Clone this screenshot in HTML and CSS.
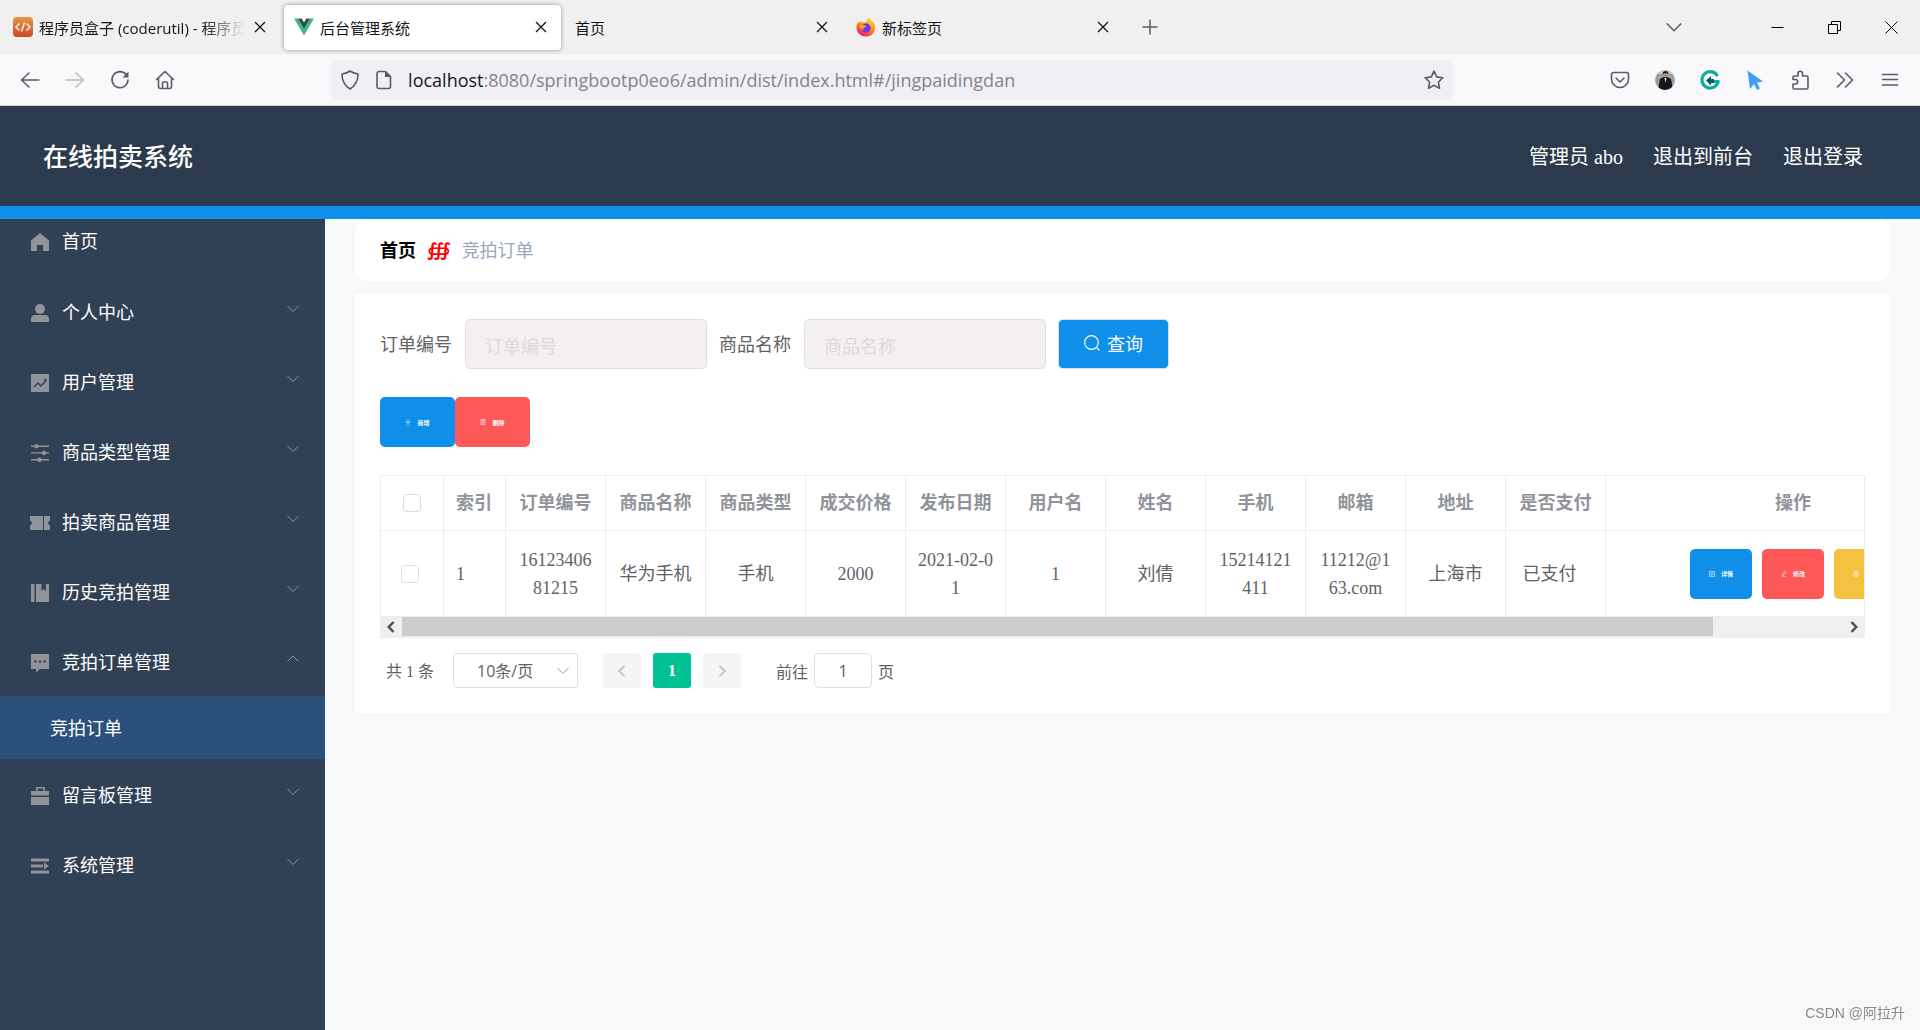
FILE: index.html
```html
<!DOCTYPE html>
<html lang="zh-CN">
<head>
<meta charset="utf-8">
<meta name="viewport" content="width=device-width, initial-scale=1">
<title>后台管理系统</title>
<link rel="stylesheet" href="styles.css">
</head>
<body>
<div class="browser">
  <div class="tabstrip">
    <div class="tab">
      <svg class="tab-icon" viewBox="0 0 20 20"><defs><linearGradient id="box" x1="0" y1="0" x2="0" y2="1"><stop offset="0" stop-color="#e8964f"/><stop offset="1" stop-color="#c94a26"/></linearGradient></defs><rect width="20" height="20" rx="4" fill="url(#box)"/><path d="M6.500 6.500 3 10l3.500 3.500M13.500 6.500 17 10l-3.500 3.500M11.500 5.500l-3 9" fill="none" stroke="#fbe6d6" stroke-width="1.600"/></svg>
      <span class="tab-title fade">程序员盒子 (coderutil) - 程序员</span>
      <button class="tab-close" aria-label="关闭"><svg viewBox="0 0 12 12"><path d="M1 1l10 10M11 1 1 11"/></svg></button>
    </div>
    <div class="tab active">
      <svg class="tab-icon" viewBox="0 0 20 20"><path d="M0 1.500h4L10 12l6-10.500h4L10 18.500z" fill="#41b883"/><path d="M4 1.500h3.700L10 5.500l2.300-4H16L10 12z" fill="#35495e"/></svg>
      <span class="tab-title">后台管理系统</span>
      <button class="tab-close" aria-label="关闭"><svg viewBox="0 0 12 12"><path d="M1 1l10 10M11 1 1 11"/></svg></button>
    </div>
    <div class="tab">
      <span class="tab-title">首页</span>
      <button class="tab-close" aria-label="关闭"><svg viewBox="0 0 12 12"><path d="M1 1l10 10M11 1 1 11"/></svg></button>
    </div>
    <div class="tab">
      <svg class="tab-icon" viewBox="0 0 20 20"><defs><linearGradient id="fox" x1="0.800" y1="0" x2="0.300" y2="1"><stop offset="0" stop-color="#ffe83a"/><stop offset="0.450" stop-color="#ff9420"/><stop offset="1" stop-color="#f5156c"/></linearGradient></defs><path d="M13.500.500c.5 2 3 3.300 4.300 5.300 3 4.500 1.200 13.700-7.800 13.700C3 19.500-.500 13.500.700 8.500c.2-1.500.8-2.800 1.600-3.700l.6 1.400C3.500 5 4.300 4.200 5 3.800c0 .8.200 1.400.7 1.800 1.300-.6 3-.6 4.300-.1.500-2.200 1.700-4 3.500-5z" fill="url(#fox)"/><circle cx="10" cy="11" r="4.600" fill="#6a3be0"/><path d="M4.500 8.200c2-.5 3.700 0 5.300.5.800.8-.5 1.800-2.300 2.100-.7.300-.3 1.700 1 2-2.500.3-4.800-2-4-4.600z" fill="#ffa62b"/></svg>
      <span class="tab-title">新标签页</span>
      <button class="tab-close" aria-label="关闭"><svg viewBox="0 0 12 12"><path d="M1 1l10 10M11 1 1 11"/></svg></button>
    </div>
    <button class="new-tab" aria-label="新建标签页"><svg viewBox="0 0 16 16"><path d="M8 .500v15M.500 8h15"/></svg></button>
    <div class="window-controls">
      <button class="tab-list" aria-label="列出标签页"><svg viewBox="0 0 16 16"><path d="M.800 4.500 8 11.800l7.200-7.300"/></svg></button>
      <button aria-label="最小化"><svg viewBox="0 0 13 13"><path d="M.500 6.500h12"/></svg></button>
      <button aria-label="还原"><svg viewBox="0 0 13 13"><path d="M.500 3.500h9v9h-9zM3.500 3.500v-3h9v9h-3"/></svg></button>
      <button aria-label="关闭窗口"><svg viewBox="0 0 13 13"><path d="M.500.500l12 12M12.500.500l-12 12"/></svg></button>
    </div>
  </div>
  <div class="toolbar">
    <button aria-label="后退"><svg viewBox="0 0 20 20"><path d="M19 10H2M9 3l-7.500 7L9 17"/></svg></button>
    <button class="disabled" aria-label="前进"><svg viewBox="0 0 20 20"><path d="M1 10h17M11 3l7.500 7-7.500 7"/></svg></button>
    <button aria-label="刷新"><svg viewBox="0 0 20 20"><path d="M16.500 5A8 8 0 1 0 18 10"/><path d="M18.500 1.500v6h-6z" fill="#5b5b66" stroke="none"/></svg></button>
    <button aria-label="主页"><svg viewBox="0 0 20 20"><path d="M1.500 9.500 10 1.500l8.500 8M3.500 8v8.500a2 2 0 0 0 2 2h9a2 2 0 0 0 2-2V8M7.500 18v-5a1 1 0 0 1 1-1h3a1 1 0 0 1 1 1v5"/></svg></button>
    <div class="spring"></div>
    <div class="urlbar">
      <svg viewBox="0 0 20 20"><path d="M10 1c2.500 1.800 5 2.500 8 3 0 6-1.500 11-8 15C3.500 15 2 10 2 4c3-.5 5.500-1.200 8-3z"/></svg>
      <svg viewBox="0 0 20 20"><path d="M5 1.500h6.500l5 5v10a2 2 0 0 1-2 2H5a2 2 0 0 1-2-2v-13a2 2 0 0 1 2-2z"/><path d="M11 1v6h6z" fill="#5b5b66" stroke="none"/></svg>
      <div class="url" role="textbox" aria-label="地址"><span class="host">localhost</span>:8080/springbootp0eo6/admin/dist/index.html#/jingpaidingdan</div>
      <button aria-label="收藏"><svg viewBox="0 0 20 20"><path d="M10 1.200l2.700 5.700 6.200.8-4.500 4.300 1.100 6.300L10 15.200l-5.500 3.100L5.600 12 1.100 7.700l6.200-.8z"/></svg></button>
    </div>
    <div class="spring"></div>
    <button aria-label="保存到 Pocket"><svg viewBox="0 0 20 20"><path d="M3.500 2.500h13a2 2 0 0 1 2 2V9a8.500 8.500 0 0 1-17 0V4.500a2 2 0 0 1 2-2zM6 8l4 4 4-4"/></svg></button>
    <button aria-label="账户"><svg viewBox="0 0 20 20"><clipPath id="face"><circle cx="10" cy="10" r="10"/></clipPath><g clip-path="url(#face)" stroke="none"><rect width="20" height="20" fill="#9aa09a"/><path d="M0 0h20v4H0z" fill="#c9cdc8"/><path d="M3 20 5 9l4-2h3l4 2 2 11z" fill="#15161c"/><circle cx="10.500" cy="4.500" r="2.800" fill="#b98f78"/><path d="M7.500 4c0-4 6-4 6 0-2-1.500-4-1.500-6 0z" fill="#17171b"/><path d="M9.500 8h2l-1 5z" fill="#e8e8ea"/></g></svg></button>
    <button aria-label="Grammarly"><svg viewBox="0 0 20 20"><path d="M16.800 5A8.200 8.200 0 1 0 18.200 11.500H12" fill="none" stroke="#0fae9c" stroke-width="3.200"/><path d="M6 10.500l5-4.500v3h3v4h-3v2.500z" fill="#075f5c" stroke="none"/></svg></button>
    <button aria-label="指针"><svg viewBox="0 0 20 20"><path d="M2.500.500 18 11.500l-6 1 3 6-3 1.500-3-6-4 5z" fill="#459bfb" stroke="none"/></svg></button>
    <button aria-label="扩展"><svg viewBox="0 0 20 20"><path d="M8 6V3.500a2 2 0 0 1 4.500 0V6h4a1.500 1.500 0 0 1 1.500 1.500v10a1.500 1.500 0 0 1-1.500 1.500h-12A1.500 1.500 0 0 1 3 17.500V14h2.500a2 2 0 0 0 0-4.500H3v-2A1.500 1.500 0 0 1 4.500 6z"/></svg></button>
    <button aria-label="更多工具"><svg viewBox="0 0 20 20"><path d="M2.500 3l7 7-7 7M10.500 3l7 7-7 7"/></svg></button>
    <button aria-label="菜单"><svg viewBox="0 0 20 20"><path d="M2.500 4.500h15M2.500 9.500h15M2.500 15h15"/></svg></button>
  </div>
</div>

<header class="header">
  <h1>在线拍卖系统</h1>
  <nav class="header-links">
    <span>管理员 abo</span>
    <a href="#front">退出到前台</a>
    <a href="#logout">退出登录</a>
  </nav>
</header>

<div class="layout">
  <nav class="sidebar" aria-label="主菜单">
    <a class="item home" href="#home"><svg class="ico" viewBox="0 0 18 18"><path d="M9 0l9 7.500V18h-6v-6H6v6H0V7.500z"/></svg><span>首页</span></a>
    <button class="item"><svg class="ico" viewBox="0 0 18 18"><circle cx="9" cy="5" r="5"/><path d="M0 18v-3a4 4 0 0 1 4-4h10a4 4 0 0 1 4 4v3z"/></svg><span>个人中心</span><svg class="arrow" viewBox="0 0 12 12"><path d="M.500 3 6 8.500 11.500 3"/></svg></button>
    <button class="item"><svg class="ico" viewBox="0 0 18 18"><path d="M0 0h18v18H0z"/><path d="M3 13l4-4 3 3 5.500-6M13 5.500h2" fill="none" stroke="#304156" stroke-width="1.500"/></svg><span>用户管理</span><svg class="arrow" viewBox="0 0 12 12"><path d="M.500 3 6 8.500 11.500 3"/></svg></button>
    <button class="item"><svg class="ico" viewBox="0 0 18 18"><path d="M0 1.500h18v1.400H0zM0 8.200h18v1.400H0zM0 15h18v1.400H0z"/><circle cx="5.500" cy="2.200" r="2.200"/><circle cx="13" cy="9" r="2.200"/><circle cx="8.500" cy="15.700" r="2.200"/></svg><span>商品类型管理</span><svg class="arrow" viewBox="0 0 12 12"><path d="M.500 3 6 8.500 11.500 3"/></svg></button>
    <button class="item"><svg class="ico" viewBox="0 0 18 18"><path d="M-1 2h13v14H-1v-4.500a2.600 2.600 0 0 0 0-5zM13 2h6v4.500a2.600 2.600 0 0 0 0 5V16h-6z"/><path d="M12.500 4v11" stroke="#304156" stroke-dasharray="2 2"/></svg><span>拍卖商品管理</span><svg class="arrow" viewBox="0 0 12 12"><path d="M.500 3 6 8.500 11.500 3"/></svg></button>
    <button class="item"><svg class="ico" viewBox="0 0 18 18"><path d="M0 0h3.500v18H0zM5 0h5.500v7l2.300-2 2.200 2V0h3v18H5z"/></svg><span>历史竞拍管理</span><svg class="arrow" viewBox="0 0 12 12"><path d="M.500 3 6 8.500 11.500 3"/></svg></button>
    <button class="item" aria-expanded="true"><svg class="ico" viewBox="0 0 18 18"><path d="M0 0h18v15H9l-4 3.500V15H0z"/><path d="M3 6.500h2.400v2H3zM7.800 6.500h2.400v2H7.800zM12.600 6.500H15v2h-2.400z" fill="#304156"/></svg><span>竞拍订单管理</span><svg class="arrow" viewBox="0 0 12 12"><path d="M.500 8.500 6 3l5.500 5.500"/></svg></button>
    <a class="subitem" href="#jingpaidingdan" aria-current="page">竞拍订单</a>
    <button class="item"><svg class="ico" viewBox="0 0 18 18"><path d="M5 0h9v4h4v4.500H0V4h5zM6.500 1.500V4h6V1.500zM0 10h18v8H0z" fill-rule="evenodd"/></svg><span>留言板管理</span><svg class="arrow" viewBox="0 0 12 12"><path d="M.500 3 6 8.500 11.500 3"/></svg></button>
    <button class="item"><svg class="ico" viewBox="0 0 18 18"><path d="M0 1.500h18v3H0zM0 7.500h12v3H0zM0 13.500h18v3H0zM13 5.500l5 3.500-5 3.500z"/></svg><span>系统管理</span><svg class="arrow" viewBox="0 0 12 12"><path d="M.500 3 6 8.500 11.500 3"/></svg></button>
  </nav>

  <main class="main">
    <nav class="breadcrumb" aria-label="面包屑">
      <a href="#home">首页</a><span class="sep">∰</span><span class="current">竞拍订单</span>
    </nav>

    <section class="card">
      <form class="search">
        <label for="order-no">订单编号</label>
        <input id="order-no" type="text" placeholder="订单编号">
        <label for="goods-name">商品名称</label>
        <input id="goods-name" type="text" placeholder="商品名称">
        <button type="button"><svg viewBox="0 0 16 16"><circle cx="7.500" cy="7.500" r="6.800"/><path d="M12.200 12.200 15.500 15.500"/></svg>查询</button>
      </form>

      <div class="actions">
        <button class="btn blue"><svg viewBox="0 0 6 6"><path d="M3 0v6M0 3h6"/></svg>新增</button>
        <button class="btn red"><svg viewBox="0 0 6 6"><path d="M.500 1h5M2 1V.300h2V1M1 1v4.600h4V1M2.400 2.200v2.400M3.600 2.200v2.400"/></svg>删除</button>
      </div>

      <div class="table-box">
        <div class="table-clip">
          <table>
            <colgroup>
              <col class="c-check"><col class="c-index"><col class="c"><col class="c"><col class="c"><col class="c"><col class="c"><col class="c"><col class="c"><col class="c"><col class="c"><col class="c"><col class="c"><col>
            </colgroup>
            <thead>
              <tr>
                <th><input type="checkbox" aria-label="全选"></th>
                <th class="left">索引</th><th>订单编号</th><th>商品名称</th><th>商品类型</th><th>成交价格</th><th>发布日期</th><th>用户名</th><th>姓名</th><th>手机</th><th>邮箱</th><th>地址</th><th>是否支付</th><th>操作</th>
              </tr>
            </thead>
            <tbody>
              <tr>
                <td class="left"><input class="row-check" type="checkbox" aria-label="选择第 1 行"></td>
                <td class="left">1</td><td>1612340681215</td><td>华为手机</td><td>手机</td><td>2000</td><td>2021-02-01</td><td>1</td><td>刘倩</td><td>15214121411</td><td>11212@163.com</td><td>上海市</td><td class="status">已支付</td>
                <td>
                  <div class="ops">
                    <button class="btn blue"><svg viewBox="0 0 6 6"><path d="M.500.300h5v5.400h-5zM1.700 2h2.600M1.700 3.200h2.600M1.700 4.400h1.600"/></svg>详情</button>
                    <button class="btn red"><svg viewBox="0 0 6 6"><path d="M1.500 3.500 4 .500l1 1L2.500 4.200l-1.200.3zM.500 5.700h5"/></svg>修改</button>
                    <button class="btn yellow"><svg viewBox="0 0 6 6"><path d="M.500 1h5M2 1V.300h2V1M1 1v4.600h4V1M2.400 2.200v2.400M3.600 2.200v2.400"/></svg>删除</button>
                  </div>
                </td>
              </tr>
            </tbody>
          </table>
        </div>
        <div class="scrollbar" aria-hidden="true">
          <svg viewBox="0 0 8 12"><path d="M6.500 1 1.800 6l4.700 5"/></svg>
          <div class="track"><div class="thumb"></div></div>
          <svg viewBox="0 0 8 12"><path d="M1.500 1l4.700 5-4.700 5"/></svg>
        </div>
      </div>

      <div class="pagination">
        <span class="total">共 1 条</span>
        <span class="select-box">
          <select aria-label="每页条数"><option>10条/页</option></select>
          <svg viewBox="0 0 12 12"><path d="M.500 3 6 8.500 11.500 3"/></svg>
        </span>
        <div class="pages">
          <button aria-label="上一页" disabled><svg viewBox="0 0 12 12"><path d="M8.500 1 3 6l5.500 5"/></svg></button>
          <button class="on">1</button>
          <button aria-label="下一页" disabled><svg viewBox="0 0 12 12"><path d="M3.500 1 9 6l-5.500 5"/></svg></button>
        </div>
        <label class="jump">前往<input type="text" value="1">页</label>
      </div>
    </section>
  </main>
</div>
<div class="watermark">CSDN @阿拉升</div>
</body>
</html>
```
FILE: styles.css
```css
* { box-sizing: border-box; }

body {
  margin: 0;
  min-height: 100vh;
  display: flex;
  flex-direction: column;
  background: #f7f8fa;
  font-family: "Liberation Serif", "Noto Sans CJK SC", serif;
  font-size: 18px;
  color: #606266;
}

button, input, select { font: inherit; color: inherit; }
button { border: 0; padding: 0; background: none; }
a { color: inherit; text-decoration: none; }
svg { display: block; flex: none; }

/* Browser window */
.browser { font-family: "Open Sans", "Noto Sans CJK SC", sans-serif; color: #15141a; }
.tabstrip { display: flex; align-items: center; height: 55px; padding: 0 0 1px 3px; background: #f0f0f0; }
.tab {
  display: flex;
  align-items: center;
  gap: 6px;
  flex: 0 1 277px;
  min-width: 0;
  height: 45px;
  margin-right: 4px;
  padding: 0 10px;
  border-radius: 4px;
  font-size: 15px;
}
.tab.active { background: #fff; box-shadow: 0 0 4px rgba(0, 0, 0, .4); }
.tab-icon { width: 20px; height: 20px; }
.tab-title { flex: 1; min-width: 0; overflow: hidden; white-space: nowrap; }
.tab-title.fade { -webkit-mask-image: linear-gradient(to left, transparent, #000 40px); mask-image: linear-gradient(to left, transparent, #000 40px); }
.tab-close { display: grid; place-items: center; width: 20px; height: 20px; }
.tab-close svg { width: 12px; height: 12px; fill: none; stroke: #15141a; stroke-width: 1.300; }
.new-tab { display: grid; place-items: center; width: 45px; height: 45px; }
.new-tab svg, .tab-list svg { width: 16px; height: 16px; fill: none; stroke: #5b5b66; stroke-width: 1.500; }
.window-controls { display: flex; margin-left: auto; }
.window-controls button { display: grid; place-items: center; width: 57px; height: 52px; }
.window-controls svg { width: 13px; height: 13px; fill: none; stroke: #000; }
.window-controls .tab-list { margin-right: 47px; }
.window-controls .tab-list svg { width: 16px; height: 16px; stroke: #5b5b66; }

.toolbar { display: flex; align-items: center; height: 51px; padding: 0 8px 0 7px; background: #f9f9fb; border-bottom: 1px solid #ccc; }
.toolbar > button { display: grid; place-items: center; width: 45px; height: 40px; }
.toolbar svg { width: 20px; height: 20px; fill: none; stroke: #5b5b66; stroke-width: 1.600; stroke-linecap: round; stroke-linejoin: round; }
.toolbar .disabled { opacity: .4; }
.spring { flex: 143 1 0; }
.urlbar { display: flex; align-items: center; flex: 1103 1 0; height: 40px; padding: 0 10px; gap: 14px; border-radius: 5px; background: #f0f0f4; }
.url { flex: 1; min-width: 0; overflow: hidden; white-space: nowrap; font-size: 18px; color: #85848b; }
.url .host { color: #15141a; }

/* Site header */
.header {
  display: flex;
  align-items: center;
  justify-content: space-between;
  height: 113px;
  padding: 0 57px 2px 43px;
  background: #2b3b4d;
  border-bottom: 13px solid #0f8eea;
  color: #fff;
}
.header h1 { margin: 0; font-size: 25px; font-weight: 500; }
.header-links { display: flex; gap: 30px; font-size: 20px; }

/* Side menu */
.layout { display: flex; flex: 1; }
.sidebar { flex: none; width: 325px; background: #304156; color: #fff; }
.item { display: flex; align-items: center; width: 100%; height: 70px; padding: 0 26px 0 31px; gap: 13px; text-align: left; }
.item.home { height: 57px; padding-bottom: 16px; }
.ico { width: 18px; height: 18px; margin-top: 4px; fill: #909399; overflow: visible; }
.arrow { width: 12px; height: 12px; margin: 0 0 4px auto; fill: none; stroke: #909399; }
.subitem { display: flex; align-items: center; height: 63px; padding: 0 0 2px 50px; background: #2b517a; }

/* Content */
.main { flex: 1; min-width: 0; padding: 0 30px 30px; }
.breadcrumb { display: flex; align-items: center; height: 62px; padding: 0 25px 2px; gap: 11px; margin-bottom: 13px; border-radius: 12px; background: #fff; }
.breadcrumb a { color: #000; font-weight: 700; }
.breadcrumb .sep { color: #f00; font-family: "DejaVu Serif", "DejaVu Sans", serif; font-size: 18px; font-weight: 700; font-style: italic; }
.breadcrumb .current { color: #97a8be; }
.card { padding: 25px; background: #fff; }

.search { display: flex; align-items: center; flex-wrap: wrap; }
.search label { width: 73px; margin-right: 12px; padding-bottom: 2px; white-space: nowrap; }
.search input { width: 242px; height: 50px; padding: 2px 19px 0; margin-right: 12px; border: 1px solid #dcdfe6; border-radius: 5px; background: #f4f0ef; outline: 0; font-family: "Noto Sans CJK SC", sans-serif; }
.search input::placeholder { color: #dbd9dc; opacity: 1; }
.search button { display: flex; align-items: center; justify-content: center; gap: 7px; width: 111px; height: 50px; padding-bottom: 2px; border: 1px solid #dcdfe6; border-radius: 5px; background: #0f8eea; color: #fff; }
.search svg { width: 16px; height: 16px; fill: none; stroke: #fff; stroke-width: 1.200; }

.btn { display: flex; align-items: center; justify-content: center; gap: 6px; width: 75px; height: 50px; border-radius: 5px; color: #fff; font-size: 6px; font-weight: 700; }
.btn svg { width: 6px; height: 6px; fill: none; stroke: #fff; stroke-width: .6; }
.blue { background: #0f8eea; }
.red { background: #ff5858; }
.yellow { background: #f5c23f; }
.actions { display: flex; margin: 28px 0; }

.table-box { border: 1px solid #ebeef5; border-bottom-width: 2px; }
.table-clip { overflow: hidden; }
table { table-layout: fixed; width: 100%; min-width: 1600px; border-collapse: separate; border-spacing: 0; }
.c-check { width: 63px; }
.c-index { width: 62px; }
.c { width: 100px; }
th, td { padding: 0 12px; border-right: 1px solid #ebeef5; border-bottom: 1px solid #ebeef5; line-height: 28px; text-align: center; word-break: break-all; }
th { height: 55px; color: #909399; font-weight: 700; }
td { height: 86px; }
.left { text-align: left; }
.status { padding-right: 24px; }
input[type="checkbox"] { appearance: none; display: block; width: 18px; height: 18px; margin: 0 auto; border: 1px solid #dcdfe6; border-radius: 3px; background: #fff; }
input.row-check { margin: 0 8px; }
.ops { display: flex; justify-content: center; gap: 10px; }
.ops .btn { width: 62px; }

.scrollbar { display: flex; align-items: center; height: 19px; padding: 0 6px; gap: 7px; background: #efefef; }
.scrollbar svg { width: 8px; height: 12px; fill: none; stroke: #505050; stroke-width: 2.500; }
.track { flex: 1; height: 19px; }
.thumb { width: 91%; height: 19px; background: #cdcdcd; }

.pagination { display: flex; align-items: center; margin-top: 15px; padding-left: 6px; font-size: 16px; }
.total { width: 67px; padding-bottom: 2px; }
.select-box { display: grid; align-items: center; width: 125px; }
.select-box select { grid-area: 1 / 1; appearance: none; width: 100%; height: 35px; padding: 0 23px; border: 1px solid #dcdfe6; border-radius: 4px; background: #fff; font-family: "Open Sans", "Noto Sans CJK SC", sans-serif; }
.select-box svg { grid-area: 1 / 1; justify-self: end; width: 12px; height: 12px; margin-right: 9px; }
.pagination svg { fill: none; stroke: #c0c4cc; stroke-width: 1.200; pointer-events: none; }
.pages { display: flex; gap: 12px; margin: 0 35px 0 25px; }
.pages button { display: grid; place-items: center; width: 38px; height: 35px; border-radius: 3px; background: #f4f4f5; }
.pages .on { background: #00c292; color: #fff; font-weight: 700; }
.pages svg { width: 12px; height: 12px; stroke-width: 2; }
.jump { display: flex; align-items: center; gap: 6px; }
.jump input { width: 58px; height: 35px; border: 1px solid #dcdfe6; border-radius: 5px; text-align: center; font-family: "Open Sans", sans-serif; }

.watermark { position: fixed; right: 15px; bottom: 8px; font: 14px "Liberation Sans", "Noto Sans CJK SC", sans-serif; color: #888; text-shadow: 0 0 1px #fff; }
```
